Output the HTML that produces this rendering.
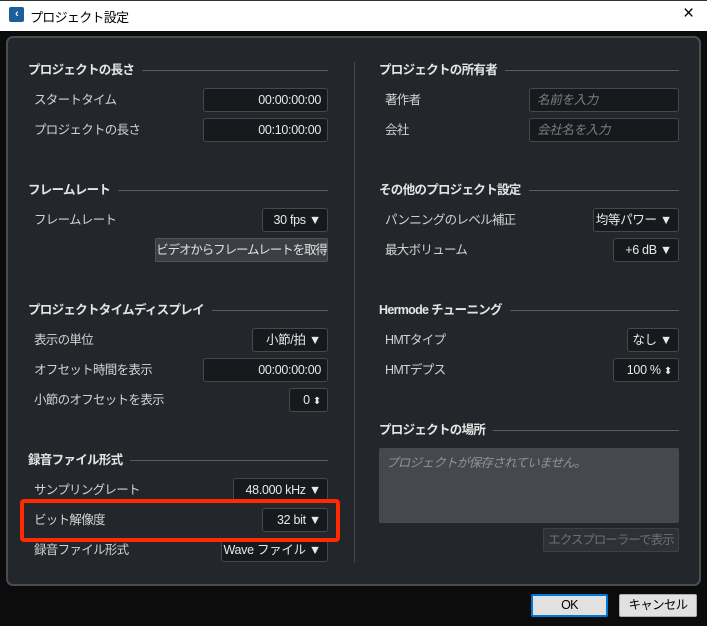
<!DOCTYPE html><html><head><meta charset="utf-8"><style>
*{box-sizing:border-box;margin:0;padding:0}
body{width:707px;height:626px;background:#0c0c0c;position:relative;overflow:hidden;font-family:"Liberation Sans","Noto Sans CJK JP",sans-serif;font-size:12.5px;letter-spacing:-0.7px;color:#d2d2d2;white-space:nowrap}
.a{position:absolute}
.title{left:0;top:0;width:707px;height:31px;background:#fff;border-top:1px solid #333}
.panel{left:6px;top:36px;width:695px;height:550px;background:#23272b;border:2px solid #4a4d50;border-radius:7px}
.h{font-weight:bold;color:#e4e4e4;height:20px;line-height:20px;display:flex;align-items:center;width:300px}
.h::after{content:"";flex:1;height:1px;background:#5a5d60;margin-left:8px}
.l{line-height:20px;height:20px}
.f{height:24px;background:#17191c;border:1px solid #45484c;border-radius:3px;line-height:22px;text-align:right;padding-right:6px;color:#e8e8e8;letter-spacing:-0.3px}
.ph{text-align:left;padding-left:7px;font-style:italic;color:#7b7e82}
.btn{height:24px;line-height:22px;text-align:center;border-radius:2px;overflow:hidden}
</style></head><body>
<div class="a title"></div>
<div class="a" style="left:9px;top:7px;width:15px;height:15px;background:#1c5f99;border-radius:2px;color:#fff;font-size:11px;line-height:15px;text-align:center;font-weight:bold">&#8249;</div>
<div class="a" style="left:30px;top:7px;color:#000;font-size:13px">プロジェクト設定</div>
<div class="a" style="left:683px;top:3px;color:#000;font-size:19px;font-weight:normal">×</div>
<div class="a panel"></div>
<div class="a" style="left:354px;top:62px;width:1px;height:501px;background:#45484b"></div>

<div class="a h" style="left:28px;top:60px">プロジェクトの長さ</div>
<div class="a l" style="left:34px;top:90px">スタートタイム</div><div class="a f" style="left:203px;top:88px;width:125px">00:00:00:00</div>
<div class="a l" style="left:34px;top:120px">プロジェクトの長さ</div><div class="a f" style="left:203px;top:118px;width:125px">00:10:00:00</div>

<div class="a h" style="left:28px;top:180px">フレームレート</div>
<div class="a l" style="left:34px;top:210px">フレームレート</div><div class="a f" style="left:262px;top:208px;width:66px">30 fps ▼</div>
<div class="a btn" style="left:155px;top:238px;width:173px;background:#3b3f43;border:1px solid #50545a;color:#e0e0e0;letter-spacing:-1.1px">ビデオからフレームレートを取得</div>

<div class="a h" style="left:28px;top:300px">プロジェクトタイムディスプレイ</div>
<div class="a l" style="left:34px;top:330px">表示の単位</div><div class="a f" style="left:252px;top:328px;width:76px">小節/拍 ▼</div>
<div class="a l" style="left:34px;top:360px">オフセット時間を表示</div><div class="a f" style="left:203px;top:358px;width:125px">00:00:00:00</div>
<div class="a l" style="left:34px;top:390px">小節のオフセットを表示</div><div class="a f" style="left:289px;top:388px;width:39px">0 <span style="font-size:10px">⬍</span></div>

<div class="a h" style="left:28px;top:450px">録音ファイル形式</div>
<div class="a l" style="left:34px;top:480px">サンプリングレート</div><div class="a f" style="left:233px;top:478px;width:95px">48.000 kHz ▼</div>
<div class="a l" style="left:34px;top:510px">ビット解像度</div><div class="a f" style="left:262px;top:508px;width:66px">32 bit ▼</div>
<div class="a l" style="left:34px;top:540px">録音ファイル形式</div><div class="a f" style="left:221px;top:538px;width:107px">Wave ファイル ▼</div>
<div class="a" style="left:20px;top:499px;width:320px;height:43px;border:4px solid #ff2a00;border-radius:4px"></div>

<div class="a h" style="left:379px;top:60px">プロジェクトの所有者</div>
<div class="a l" style="left:385px;top:90px">著作者</div><div class="a f ph" style="left:529px;top:88px;width:150px">名前を入力</div>
<div class="a l" style="left:385px;top:120px">会社</div><div class="a f ph" style="left:529px;top:118px;width:150px">会社名を入力</div>

<div class="a h" style="left:379px;top:180px">その他のプロジェクト設定</div>
<div class="a l" style="left:385px;top:210px">パンニングのレベル補正</div><div class="a f" style="left:593px;top:208px;width:86px">均等パワー ▼</div>
<div class="a l" style="left:385px;top:240px">最大ボリューム</div><div class="a f" style="left:613px;top:238px;width:66px">+6 dB ▼</div>

<div class="a h" style="left:379px;top:300px">Hermode チューニング</div>
<div class="a l" style="left:385px;top:330px">HMTタイプ</div><div class="a f" style="left:627px;top:328px;width:52px">なし ▼</div>
<div class="a l" style="left:385px;top:360px">HMTデプス</div><div class="a f" style="left:613px;top:358px;width:66px">100 % <span style="font-size:10px">⬍</span></div>

<div class="a h" style="left:379px;top:420px">プロジェクトの場所</div>
<div class="a" style="left:379px;top:448px;width:300px;height:75px;background:#45494d;border-radius:2px;padding:4px 7px;font-style:italic;color:#909397">プロジェクトが保存されていません。</div>
<div class="a btn" style="left:543px;top:528px;width:136px;background:#2e3236;border:1px solid #3e4246;color:#6d7074;letter-spacing:-1px">エクスプローラーで表示</div>

<div class="a btn" style="left:531px;top:594px;width:77px;height:23px;background:#e1e1e1;border:2px solid #0078d7;color:#000;line-height:19px">OK</div>
<div class="a btn" style="left:619px;top:594px;width:78px;height:23px;background:#e1e1e1;border:1px solid #adadad;color:#000;line-height:21px">キャンセル</div>
</body></html>
